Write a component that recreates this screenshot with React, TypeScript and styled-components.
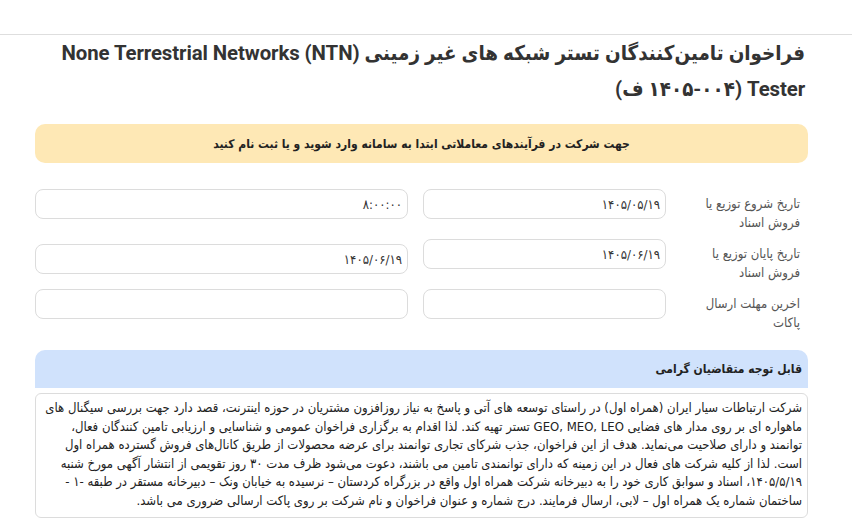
import styled, { createGlobalStyle } from "styled-components";

const GlobalStyle = createGlobalStyle`
  html, body {
    margin: 0;
    padding: 0;
    background: #fff;
  }
  body {
    font-family: "DejaVu Sans Condensed", "DejaVu Sans", sans-serif;
    color: #212529;
  }
`;

interface IField {
  label: string;
  from: string;
  to: string;
  shift?: number;
}

const fields: IField[] = [
  { label: "تاریخ شروع توزیع یا فروش اسناد", from: "۱۴۰۵/۰۵/۱۹", to: "۸:۰۰:۰۰" },
  { label: "تاریخ پایان توزیع یا فروش اسناد", from: "۱۴۰۵/۰۶/۱۹", to: "۱۴۰۵/۰۶/۱۹", shift: 5 },
  { label: "اخرین مهلت ارسال پاکات", from: "", to: "" },
];

const noticeLines = [
  "شرکت ارتباطات سیار ایران (همراه اول) در راستای توسعه های آتی و پاسخ به نیاز روزافزون مشتریان در حوزه اینترنت، قصد دارد جهت بررسی سیگنال های",
  "ماهواره ای بر روی مدار های فضایی GEO, MEO, LEO تستر تهیه کند. لذا اقدام به برگزاری فراخوان عمومی و شناسایی و ارزیابی تامین کنندگان فعال،",
  "توانمند و دارای صلاحیت می‌نماید. هدف از این فراخوان، جذب شرکای تجاری توانمند برای عرضه محصولات از طریق کانال‌های فروش گسترده همراه اول",
  "است. لذا از کلیه شرکت های فعال در این زمینه که دارای توانمندی تامین می باشند، دعوت می‌شود ظرف مدت ۳۰ روز تقویمی از انتشار آگهی مورخ شنبه",
  "۱۴۰۵/۵/۱۹، اسناد و سوابق کاری خود را به دبیرخانه شرکت همراه اول واقع در بزرگراه کردستان – نرسیده به خیابان ونک – دبیرخانه مستقر در طبقه -۱ -",
  "ساختمان شماره یک همراه اول – لابی، ارسال فرمایند. درج شماره و عنوان فراخوان و نام شرکت بر روی پاکت ارسالی ضروری می باشد.",
];

const TopBar = styled.div`
  height: 34px;
  border-bottom: 1px solid #dedede;
`;

const Page = styled.main`
  direction: rtl;
  padding: 0 44px 0 35px;
`;

const Title = styled.h1`
  margin: 0;
  padding: 0 3px 0 0;
  font-family: Roboto, "DejaVu Sans Condensed", sans-serif;
  font-size: 20.4px;
  font-weight: 700;
  line-height: 36px;
  color: #333;
  letter-spacing: -0.1px;
`;

const Alert = styled.div`
  margin-top: 17px;
  height: 39px;
  display: flex;
  align-items: center;
  justify-content: center;
  background: #fee8b5;
  border-radius: 10px;
  font-size: 12px;
  font-weight: 700;
  color: #222;
`;

const Form = styled.div`
  margin-top: 26px;
  display: flex;
  flex-direction: column;
  gap: 20px;
`;

const Row = styled.div`
  display: flex;
  align-items: flex-start;
  height: 30px;
`;

const Label = styled.div`
  width: 116px;
  padding: 5px 8px 0 18px;
  font-size: 13px;
  line-height: 19px;
  color: #555;
`;

const Input = styled.div<{ $wide?: boolean; $shift?: number }>`
  box-sizing: border-box;
  width: ${(p) => (p.$wide ? "373px" : "243px")};
  height: 30px;
  margin-top: ${(p) => p.$shift ?? 0}px;
  margin-right: ${(p) => (p.$wide ? "15px" : "0")};
  padding: 0 5px;
  border: 1px solid #dcdcdc;
  border-radius: 8px;
  display: flex;
  align-items: center;
  font-size: 13px;
  color: #333;
`;

const NoticeHead = styled.div`
  margin-top: 31px;
  height: 38px;
  display: flex;
  align-items: center;
  padding-right: 6px;
  background: #d0e2fc;
  border-radius: 10px 10px 0 0;
  font-size: 12px;
  font-weight: 700;
  color: #222;
`;

const NoticeBody = styled.div`
  margin-top: 5px;
  padding: 5px 5px 6px;
  border: 1px solid #dcdcdc;
  border-radius: 6px;
  font-size: 13px;
  line-height: 18.6px;
  color: #222;
  white-space: nowrap;
  overflow: hidden;
`;

export default function App() {
  return (
    <>
      <GlobalStyle />
      <TopBar />
      <Page>
        <Title>
          فراخوان تامین‌کنندگان تستر شبکه های غیر زمینی None Terrestrial Networks (NTN) Tester (۱۴۰۵-۰۰۴ ف)
        </Title>
        <Alert>جهت شرکت در فرآیندهای معاملاتی ابتدا به سامانه وارد شوید و یا ثبت نام کنید</Alert>
        <Form>
          {fields.map((f) => (
            <Row key={f.label}>
              <Label>{f.label}</Label>
              <Input>{f.from}</Input>
              <Input $wide $shift={f.shift}>{f.to}</Input>
            </Row>
          ))}
        </Form>
        <NoticeHead>قابل توجه متقاضیان گرامی</NoticeHead>
        <NoticeBody>
          {noticeLines.map((line, i) => (
            <div key={i}>{line}</div>
          ))}
        </NoticeBody>
      </Page>
    </>
  );
}
